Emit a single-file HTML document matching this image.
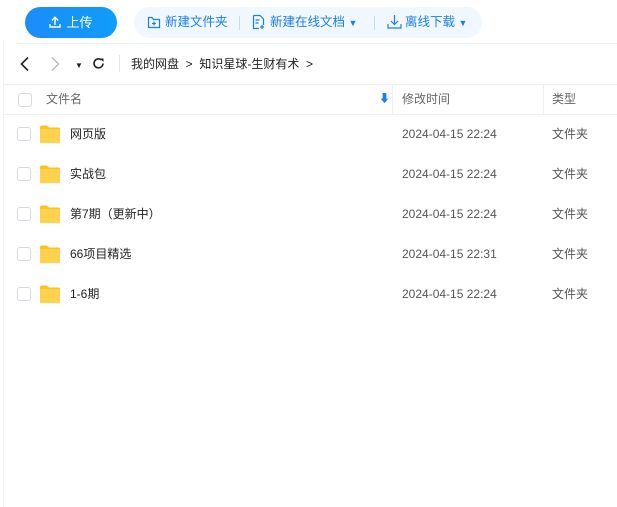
<!DOCTYPE html><html><head><meta charset="utf-8"><style>
body{margin:0;width:617px;height:507px;background:#fff;font-family:"Liberation Sans","Noto Sans CJK SC",sans-serif;font-size:12px;color:#333;position:relative;overflow:hidden}
.a{position:absolute}
span,div{line-height:16px}
.lb{left:3px;top:40px;width:1px;height:467px;background:#eef0f3}
.up{left:25px;top:7px;width:92px;height:31px;border-radius:16px;background:linear-gradient(90deg,#1c8cf9,#0f9df9);color:#fff;font-size:13px;line-height:31px;text-align:center}
.tb{left:134px;top:7px;width:348px;height:31px;border-radius:16px;background:#f0f7ff;color:#1a7fe8;font-size:12.5px}
.tb span{position:absolute;white-space:nowrap;top:7px}
.sep{position:absolute;width:1px;height:14px;top:9px;background:#c7dcf5}
.hr{left:17px;top:43px;width:600px;height:1px;background:#eceff3}
.bc{top:56px;font-size:12px;color:#222;white-space:nowrap}
.hdr{left:4px;top:84px;width:613px;height:29px;border-top:1px solid #eef0f3;border-bottom:1px solid #eef0f3;color:#666;font-size:12px}
.cb{position:absolute;width:12px;height:12px;border:1px solid #d6d9de;border-radius:3px;background:#fff}
.row{position:absolute;left:4px;width:613px;height:40px}
.row span{position:absolute;top:12px;line-height:16px}
.row .n{left:66px;color:#222}
.row .t{left:398px;color:#555}
.row .k{left:548px;color:#555}
.fd{position:absolute;left:36px;top:11px;width:20px;height:18px}
.tri{font-size:9px}
</style></head><body>
<div class="a lb"></div>
<div class="a up"><svg width="12" height="12" viewBox="0 0 12 12" style="vertical-align:-1px;margin-right:5px"><path d="M6 9V1.5M2.8 4.5L6 1.3 9.2 4.5M1 8v3h10V8" stroke="#fff" stroke-width="1.4" fill="none"/></svg>上传</div>
<div class="a tb">
<svg class="a" style="left:13px;top:8px" width="14" height="14" viewBox="0 0 14 14"><path d="M1.5 3V12.5H12.5V4.5H6.5L5 2.5H1.5Z" fill="none" stroke="#1a7fe8" stroke-width="1.2"/><path d="M7 6.5v4M5 8.5h4" stroke="#1a7fe8" stroke-width="1.2"/></svg>
<span style="left:31px">新建文件夹</span>
<div class="sep" style="left:105px"></div>
<svg class="a" style="left:118px;top:7px" width="13" height="16" viewBox="0 0 13 16"><path d="M1.5 1.5H8L11.5 5V11M7 14.5H1.5V1.5" fill="none" stroke="#1a7fe8" stroke-width="1.2"/><path d="M3.5 6h4M3.5 9h3M10 11v4M8 13h4" stroke="#1a7fe8" stroke-width="1.2"/></svg>
<span style="left:136px">新建在线文档 <span class="tri" style="position:static">▼</span></span>
<div class="sep" style="left:240px"></div>
<svg class="a" style="left:253px;top:7px" width="15" height="15" viewBox="0 0 15 15"><path d="M7.5 1v9M4 7l3.5 3.5L11 7M1 10v4h13v-4" fill="none" stroke="#1a7fe8" stroke-width="1.2"/></svg>
<span style="left:271px">离线下载 <span class="tri" style="position:static">▼</span></span>
</div>
<div class="a hr"></div>
<svg class="a" style="left:18px;top:56px" width="14" height="16" viewBox="0 0 14 16"><path d="M10 1.5L3.5 8 10 14.5" fill="none" stroke="#222" stroke-width="1.6"/></svg>
<svg class="a" style="left:48px;top:56px" width="14" height="16" viewBox="0 0 14 16"><path d="M4 1.5L10.5 8 4 14.5" fill="none" stroke="#bbb" stroke-width="1.4"/></svg>
<div class="a" style="left:75px;top:58px;font-size:8px;color:#222">▼</div>
<svg class="a" style="left:92px;top:57px" width="13" height="13" viewBox="0 0 13 13"><path d="M11 6.5A4.5 4.5 0 1 1 9.5 3" fill="none" stroke="#222" stroke-width="1.6"/><path d="M8 1.5h3.5v3.5z" fill="#222"/></svg>
<div class="a" style="left:119px;top:55px;width:1px;height:17px;background:#e2e4e8"></div>
<div class="a bc" style="left:131px">我的网盘 &nbsp;&gt;&nbsp; 知识星球-生财有术 &nbsp;&gt;</div>
<div class="a hdr">
<div class="cb" style="left:14px;top:8px"></div>
<div class="a" style="left:42px;top:6px">文件名</div>
<div class="a" style="left:375px;top:6px;color:#1a7fe8;font-size:11px">⬇</div>
<div class="a" style="left:388px;top:0;width:1px;height:29px;background:#eef0f3"></div>
<div class="a" style="left:398px;top:6px">修改时间</div>
<div class="a" style="left:539px;top:0;width:1px;height:29px;background:#eef0f3"></div>
<div class="a" style="left:548px;top:6px">类型</div>
</div>
<div class="row" style="top:114px"><div class="cb" style="left:13px;top:13px"></div><svg class="fd" viewBox="0 0 20 18"><path d="M0 2a1.5 1.5 0 0 1 1.5-1.5H7l2 2h9.5A1.5 1.5 0 0 1 20 4V16.5A1.5 1.5 0 0 1 18.5 18H1.5A1.5 1.5 0 0 1 0 16.5Z" fill="#ffc21f"/><rect x="0" y="4" width="20" height="14" rx="1.5" fill="#ffd24d"/></svg><span class="n">网页版</span><span class="t">2024-04-15 22:24</span><span class="k">文件夹</span></div>
<div class="row" style="top:154px"><div class="cb" style="left:13px;top:13px"></div><svg class="fd" viewBox="0 0 20 18"><path d="M0 2a1.5 1.5 0 0 1 1.5-1.5H7l2 2h9.5A1.5 1.5 0 0 1 20 4V16.5A1.5 1.5 0 0 1 18.5 18H1.5A1.5 1.5 0 0 1 0 16.5Z" fill="#ffc21f"/><rect x="0" y="4" width="20" height="14" rx="1.5" fill="#ffd24d"/></svg><span class="n">实战包</span><span class="t">2024-04-15 22:24</span><span class="k">文件夹</span></div>
<div class="row" style="top:194px"><div class="cb" style="left:13px;top:13px"></div><svg class="fd" viewBox="0 0 20 18"><path d="M0 2a1.5 1.5 0 0 1 1.5-1.5H7l2 2h9.5A1.5 1.5 0 0 1 20 4V16.5A1.5 1.5 0 0 1 18.5 18H1.5A1.5 1.5 0 0 1 0 16.5Z" fill="#ffc21f"/><rect x="0" y="4" width="20" height="14" rx="1.5" fill="#ffd24d"/></svg><span class="n">第7期（更新中）</span><span class="t">2024-04-15 22:24</span><span class="k">文件夹</span></div>
<div class="row" style="top:234px"><div class="cb" style="left:13px;top:13px"></div><svg class="fd" viewBox="0 0 20 18"><path d="M0 2a1.5 1.5 0 0 1 1.5-1.5H7l2 2h9.5A1.5 1.5 0 0 1 20 4V16.5A1.5 1.5 0 0 1 18.5 18H1.5A1.5 1.5 0 0 1 0 16.5Z" fill="#ffc21f"/><rect x="0" y="4" width="20" height="14" rx="1.5" fill="#ffd24d"/></svg><span class="n">66项目精选</span><span class="t">2024-04-15 22:31</span><span class="k">文件夹</span></div>
<div class="row" style="top:274px"><div class="cb" style="left:13px;top:13px"></div><svg class="fd" viewBox="0 0 20 18"><path d="M0 2a1.5 1.5 0 0 1 1.5-1.5H7l2 2h9.5A1.5 1.5 0 0 1 20 4V16.5A1.5 1.5 0 0 1 18.5 18H1.5A1.5 1.5 0 0 1 0 16.5Z" fill="#ffc21f"/><rect x="0" y="4" width="20" height="14" rx="1.5" fill="#ffd24d"/></svg><span class="n">1-6期</span><span class="t">2024-04-15 22:24</span><span class="k">文件夹</span></div>
</body></html>
